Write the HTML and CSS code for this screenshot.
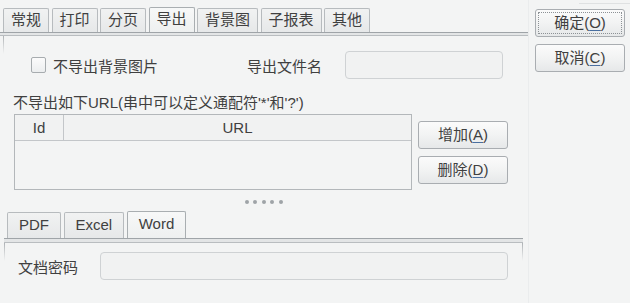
FILE: index.html
```html
<!DOCTYPE html>
<html>
<head>
<meta charset="utf-8">
<link rel="stylesheet" href="styles.css">
</head>
<body>
<div class="dialog">
  <div class="main">
    <div class="tabs">
      <div class="tab">常规</div>
      <div class="tab">打印</div>
      <div class="tab">分页</div>
      <div class="tab active">导出</div>
      <div class="tab">背景图</div>
      <div class="tab">子报表</div>
      <div class="tab">其他</div>
    </div>
    <div class="strip"></div>
    <div class="panel">
      <div class="row1">
        <span class="check"></span>
        <span class="check-label">不导出背景图片</span>
        <span class="fname-label">导出文件名</span>
        <span class="input fname"></span>
      </div>
      <div class="url-label">不导出如下URL(串中可以定义通配符'*'和'?')</div>
      <div class="url-area">
        <div class="table">
          <div class="thead">
            <div class="th th-id">Id</div>
            <div class="th th-url">URL</div>
          </div>
        </div>
        <div class="btns">
          <div class="btn">增加(<u>A</u>)</div>
          <div class="btn">删除(<u>D</u>)</div>
        </div>
      </div>
      <div class="sub">
        <div class="splitter"><i></i><i></i><i></i><i></i><i></i></div>
        <div class="subtabs">
          <div class="stab">PDF</div>
          <div class="stab">Excel</div>
          <div class="stab active">Word</div>
        </div>
        <div class="strip substrip"></div>
        <div class="subpanel">
          <span class="pwd-label">文档密码</span>
          <span class="input pwd"></span>
        </div>
      </div>
    </div>
  </div>
  <div class="side">
    <div class="topline"></div>
    <div class="btn big ok"><span class="focus">确定(<u>O</u>)</span></div>
    <div class="btn big">取消(<u>C</u>)</div>
  </div>
</div>
</body>
</html>
```

FILE: styles.css
```css
* { box-sizing: border-box; }
html, body { margin: 0; padding: 0; }
body {
  background: #f3f4f4;
  font-family: "Liberation Sans", "Noto Sans CJK SC", sans-serif;
  font-size: 15px;
  color: #404040;
  width: 630px;
  height: 303px;
  overflow: hidden;
}
.dialog { display: flex; width: 630px; height: 303px; }
.main {
  width: 529px;
  display: flex;
  flex-direction: column;
  border-right: 1px solid #eaeced;
}
.tabs {
  height: 32px;
  display: flex;
  align-items: flex-end;
  gap: 2.5px;
  padding-left: 3px;
}
.tab {
  height: 24px;
  padding: 0 7px;
  border: 1px solid #b7bbbe;
  border-bottom: none;
  border-radius: 2px 2px 0 0;
  background: linear-gradient(#f1f2f2, #e6e8e9);
  line-height: 22px;
  white-space: nowrap;
}
.tab.active {
  height: 25px;
  background: linear-gradient(#f7f8f8, #eef0f0);
  border-color: #a9aeb1;
}
.strip {
  height: 4px;
  border-top: 1px solid #9fa4a8;
  border-bottom: 1px solid #b9bdc0;
  background: #e3e5e6;
}
.panel {
  flex: 1;
  position: relative;
  margin-left: 3px;
  display: flex;
  flex-direction: column;
}
.panel::before, .subpanel::before, .subpanel::after {
  content: "";
  position: absolute;
  top: 0;
  width: 1px;
  height: 18px;
  background: linear-gradient(#aeb2b5, rgba(174,178,181,0));
}
.panel::before { left: 0; }
.row1 {
  display: flex;
  align-items: center;
  margin-top: 15px;
  height: 28px;
}
.check {
  width: 15px;
  height: 16px;
  margin-left: 28px;
  border: 1px solid #a7acaf;
  border-radius: 2px;
  background: linear-gradient(#fbfbfb, #eceeef);
}
.check-label { margin-left: 7px; }
.fname-label { margin-left: 89px; }
.input {
  display: block;
  height: 28px;
  border: 1px solid #cfd2d4;
  border-radius: 4px;
  background: #f1f2f2;
}
.fname { width: 158px; margin-left: 23px; }
.url-label {
  margin-top: 16px;
  margin-left: 10px;
  line-height: 16px;
  height: 16px;
  white-space: nowrap;
}
.url-area {
  display: flex;
  margin-top: 3px;
  margin-left: 11px;
}
.table {
  width: 398px;
  height: 76px;
  border: 1px solid #b3b7ba;
}
.thead {
  display: flex;
  height: 26px;
  border-bottom: 1px solid #c3c6c9;
  background: #f1f2f2;
}
.th { line-height: 25px; text-align: center; }
.th-id { width: 49px; border-right: 1px solid #c3c6c9; }
.th-url { flex: 1; }
.btns {
  display: flex;
  flex-direction: column;
  gap: 7px;
  margin-left: 6px;
  margin-top: 7px;
}
.btn {
  width: 90px;
  height: 28px;
  border: 1px solid #a9adb1;
  border-radius: 3px;
  background: linear-gradient(#fbfbfb, #f2f3f3 50%, #e6e8e9);
  text-align: center;
  line-height: 26px;
  white-space: nowrap;
}
.btn u { text-decoration-color: #4a6fa0; text-underline-offset: 2px; }
.sub {
  margin-left: 1px;
  width: 519px;
  display: flex;
  flex-direction: column;
}
.splitter {
  display: flex;
  justify-content: center;
  gap: 4.5px;
  margin-top: 10px;
  height: 4px;
}
.splitter i {
  width: 4px;
  height: 4px;
  border-radius: 50%;
  background: #9fa3a7;
}
.subtabs {
  height: 34px;
  display: flex;
  align-items: flex-end;
  gap: 2.5px;
  padding-left: 3px;
}
.stab {
  height: 26px;
  padding: 0 11px;
  border: 1px solid #b7bbbe;
  border-bottom: none;
  border-radius: 2px 2px 0 0;
  background: linear-gradient(#f1f2f2, #e6e8e9);
  line-height: 24px;
}
.stab.active {
  height: 27px;
  background: linear-gradient(#f7f8f8, #eef0f0);
  border-color: #a9aeb1;
}
.substrip { height: 5px; }
.subpanel {
  position: relative;
  display: flex;
  align-items: center;
  margin-top: 9px;
  height: 28px;
}
.subpanel::before { left: 0; top: -9px; }
.subpanel::after { right: 0; top: -9px; }
.pwd-label { margin-left: 14px; }
.pwd { width: 408px; margin-left: 22px; }
.side {
  flex: 1;
  display: flex;
  flex-direction: column;
  padding-left: 6px;
  padding-top: 3px;
}
.topline {
  height: 1px;
  margin-left: 44px;
  background: #dfe1e2;
  margin-bottom: 5px;
}
.btn.big { margin-bottom: 7px; padding: 2px; line-height: 22px; }
.focus {
  display: block;
  height: 22px;
  border: 1px dotted #8d9296;
  line-height: 20px;
}
```
